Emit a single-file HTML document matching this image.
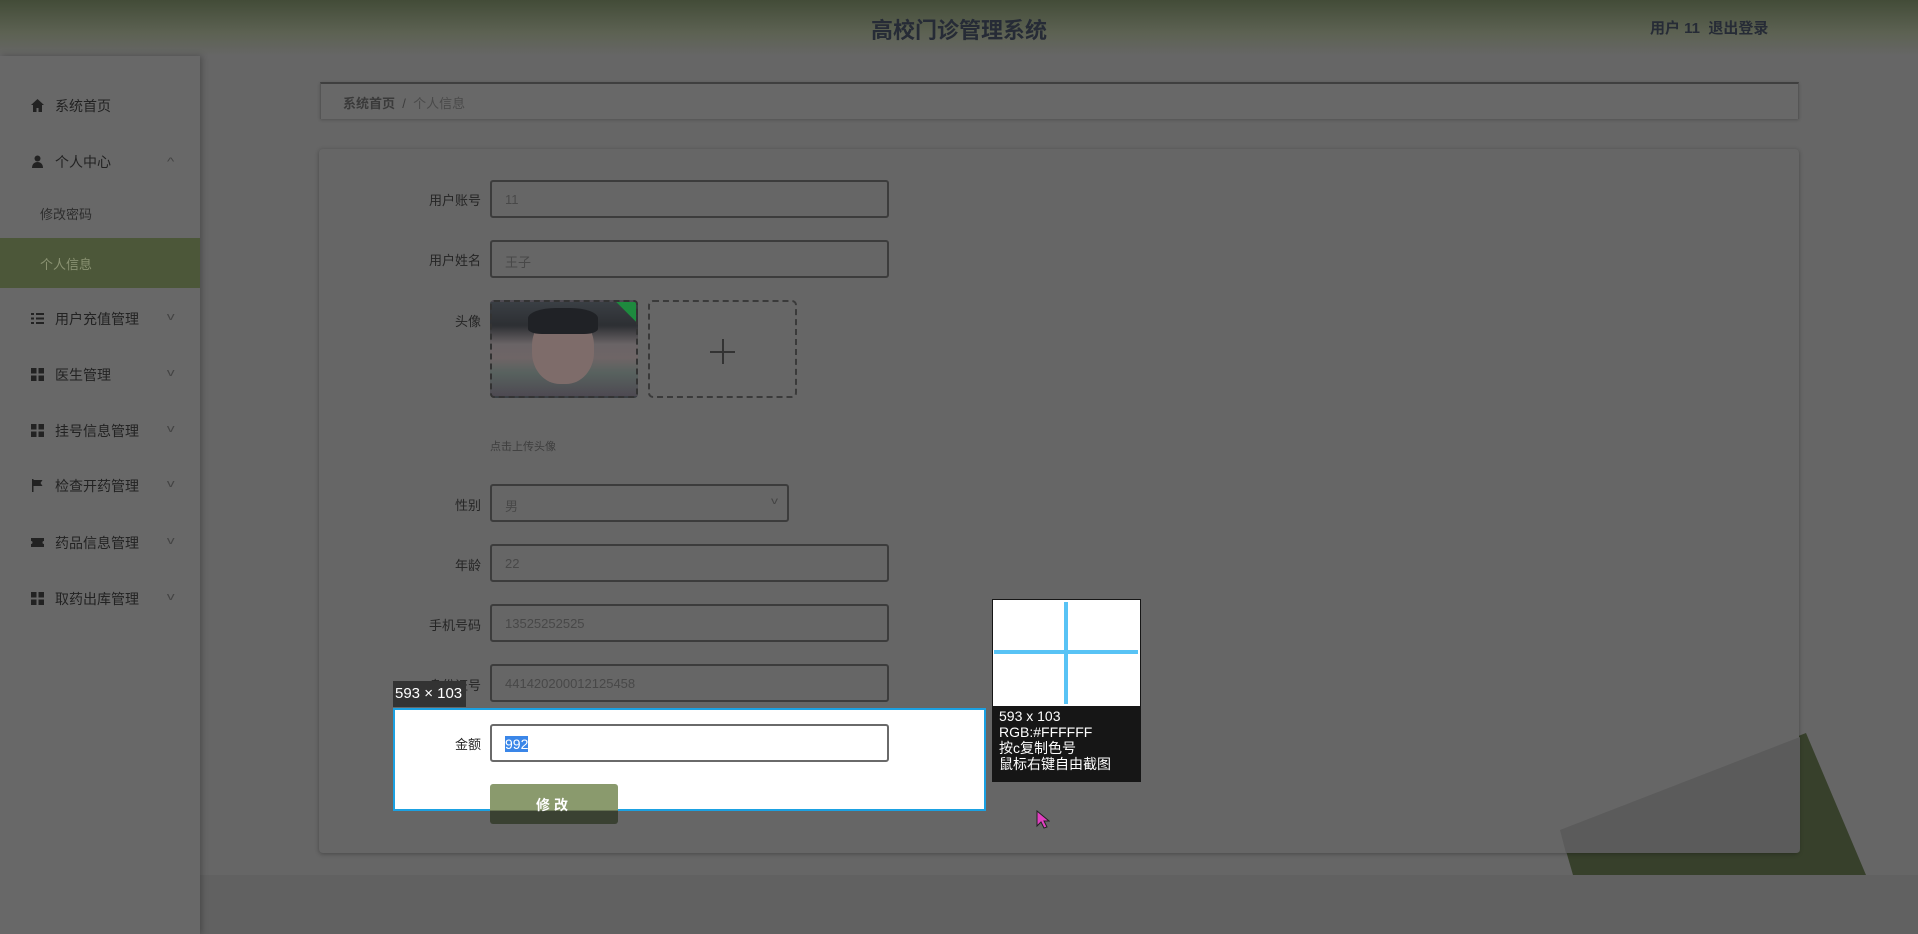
<!DOCTYPE html>
<html><head><meta charset="utf-8"><style>
*{margin:0;padding:0;box-sizing:border-box}
body{width:1918px;height:934px;overflow:hidden;background:#666;font-family:"Liberation Sans","Noto Sans CJK SC",sans-serif;position:relative;color:#2b2b2b}
.hdr{position:absolute;left:0;top:0;width:1918px;height:56px;background:linear-gradient(#434c38,#5d6253 60%,#666 100%)}
.title{position:absolute;left:0;width:1918px;top:13px;text-align:center;font-size:22px;font-weight:bold;color:#262b36}
.user{position:absolute;left:1650px;top:17px;font-size:15px;font-weight:bold;color:#262b36}
.side{position:absolute;left:0;top:56px;width:200px;height:878px;background:#686868;box-shadow:2px 0 6px rgba(0,0,0,.25)}
.mi{position:absolute;left:0;width:200px;font-size:14px;color:#222}
.mi .ic{position:absolute;left:31px;top:3px;width:13px;height:13px}
.mi .tx{position:absolute;left:55px}
.mi .ch{position:absolute;left:168px;top:2px;font-size:11px;color:#444;transform:scaleX(1.4)}
.act{position:absolute;left:0;top:238px;width:200px;height:50px;background:#4c5739}
.bc{position:absolute;left:320px;top:82px;width:1479px;height:37px;border-top:2px solid #3f3f3f;border-left:1px solid #555;border-right:1px solid #555;background:#686868;box-shadow:0 1px 3px rgba(0,0,0,.2);font-size:13px;color:#3d3d3d;padding:9px 0 0 22px}
.card{position:absolute;left:319px;top:149px;width:1480px;height:704px;background:#666;border-radius:4px;box-shadow:0 1px 5px rgba(0,0,0,.3)}
.lb{position:absolute;width:100px;left:381px;text-align:right;font-size:13px;color:#252525}
.in{position:absolute;left:490px;width:399px;height:38px;border:2px solid #3c3c3c;border-radius:3px;font-size:13px;color:#484848;padding:10px 0 0 13px}
</style></head><body>
<div class="hdr"></div>
<div class="title">高校门诊管理系统</div>
<div class="user">用户 11&nbsp;&nbsp;退出登录</div>
<div style="position:absolute;left:200px;top:875px;width:1718px;height:59px;background:#616161"></div>
<div class="side"></div>
<div class="act"></div>
<div class="mi" style="top:96px"><svg class="ic" viewBox="0 0 13 13"><path d="M6.5 0L0 6h2v7h3.5V9h2v4H11V6h2z" fill="#222"/></svg><span class="tx">系统首页</span></div>
<div class="mi" style="top:152px"><svg class="ic" viewBox="0 0 13 13"><circle cx="6.5" cy="3.5" r="3" fill="#222"/><path d="M1 13c0-4 2.5-6 5.5-6s5.5 2 5.5 6z" fill="#222"/></svg><span class="tx">个人中心</span><span class="ch" style="top:4px">^</span></div>
<div class="mi" style="top:204px;font-size:13px;color:#2d2d2d"><span class="tx" style="left:40px">修改密码</span></div>
<div class="mi" style="top:254px;font-size:13px;color:#8a9272"><span class="tx" style="left:40px">个人信息</span></div>
<div class="mi" style="top:309px"><svg class="ic" viewBox="0 0 13 13"><path d="M0 1h3v2H0zM5 1h8v2H5zM0 5.5h3v2H0zM5 5.5h8v2H5zM0 10h3v2H0zM5 10h8v2H5z" fill="#222"/></svg><span class="tx">用户充值管理</span><span class="ch">v</span></div>
<div class="mi" style="top:365px"><svg class="ic" viewBox="0 0 13 13"><path d="M0 0h5.5v5.5H0zM7.5 0H13v5.5H7.5zM0 7.5h5.5V13H0zM7.5 7.5H13V13H7.5z" fill="#222"/></svg><span class="tx">医生管理</span><span class="ch">v</span></div>
<div class="mi" style="top:421px"><svg class="ic" viewBox="0 0 13 13"><path d="M0 0h5.5v5.5H0zM7.5 0H13v5.5H7.5zM0 7.5h5.5V13H0zM7.5 7.5H13V13H7.5z" fill="#222"/></svg><span class="tx">挂号信息管理</span><span class="ch">v</span></div>
<div class="mi" style="top:476px"><svg class="ic" viewBox="0 0 13 13"><path d="M1 0h1.5v13H1zM2.5 1h9l-2 3 2 3h-9z" fill="#222"/></svg><span class="tx">检查开药管理</span><span class="ch">v</span></div>
<div class="mi" style="top:533px"><svg class="ic" viewBox="0 0 13 13"><path d="M0 2h13v3a1.5 1.5 0 000 3v3H0V8a1.5 1.5 0 000-3z" fill="#222"/></svg><span class="tx">药品信息管理</span><span class="ch">v</span></div>
<div class="mi" style="top:589px"><svg class="ic" viewBox="0 0 13 13"><path d="M0 0h5.5v5.5H0zM7.5 0H13v5.5H7.5zM0 7.5h5.5V13H0zM7.5 7.5H13V13H7.5z" fill="#222"/></svg><span class="tx">取药出库管理</span><span class="ch">v</span></div>

<div class="bc"><b style="font-weight:bold;color:#3a3a3a">系统首页</b>&nbsp;&nbsp;/&nbsp;&nbsp;<span style="color:#4a4a4a">个人信息</span></div>
<svg style="position:absolute;left:0;top:0" width="1918" height="934"><path d="M1806 733L1866 875H1573L1560 830z" fill="#37402b"/></svg>
<div class="card"></div>
<svg style="position:absolute;left:0;top:0" width="1918" height="934"><path d="M1560 830L1800 737V849Q1800 853 1796 853H1566z" fill="#5b5b5b"/></svg>

<div class="lb" style="top:190px">用户账号</div><div class="in" style="top:180px">11</div>
<div class="lb" style="top:250px">用户姓名</div><div class="in" style="top:240px">王子</div>
<div class="lb" style="top:311px">头像</div>
<div style="position:absolute;left:490px;top:300px;width:148px;height:98px;border:2px dashed #333;border-radius:4px;background:linear-gradient(#3a3f44 0%,#2d2f33 25%,#6a6466 45%,#6e6566 60%,#58625f 75%,#4e4a52 100%);overflow:hidden"><div style="position:absolute;right:-14px;top:-14px;width:28px;height:28px;background:#1e8a3e;transform:rotate(45deg)"></div><div style="position:absolute;left:40px;top:12px;width:62px;height:70px;border-radius:45%;background:#7e6c6a"></div><div style="position:absolute;left:36px;top:6px;width:70px;height:26px;border-radius:40% 40% 20% 20%;background:#202226"></div></div>
<div style="position:absolute;left:648px;top:300px;width:149px;height:98px;border:2px dashed #3a3a3a;border-radius:5px"></div>
<div style="position:absolute;left:710px;top:351px;width:25px;height:1.5px;background:#333"></div>
<div style="position:absolute;left:722px;top:339px;width:1.5px;height:25px;background:#333"></div>
<div style="position:absolute;left:490px;top:438px;font-size:11px;color:#3e3e3e">点击上传头像</div>
<div class="lb" style="top:495px">性别</div><div class="in" style="top:484px;width:299px">男<span style="position:absolute;right:10px;top:10px;color:#444;font-size:10px;transform:scaleX(1.4)">v</span></div>
<div class="lb" style="top:555px">年龄</div><div class="in" style="top:544px">22</div>
<div class="lb" style="top:615px">手机号码</div><div class="in" style="top:604px">13525252525</div>
<div class="lb" style="top:675px">身份证号</div><div class="in" style="top:664px">441420200012125458</div>

<div style="position:absolute;left:393px;top:708px;width:593px;height:103px;background:#fff;border:2px solid #1ba1e2"></div>
<div style="position:absolute;left:393px;top:681px;width:73px;height:26px;background:#333;color:#fff;font-size:15px;padding:4px 0 0 2px">593 × 103</div>
<div class="lb" style="top:734px">金额</div>
<div class="in" style="top:724px;background:#fff;border-color:#6a6a6a"><span style="background:#3a86e8;color:#fff;font-size:14px">992</span></div>
<div style="position:absolute;left:490px;top:784px;width:128px;height:40px;border-radius:3px;background:linear-gradient(#8a9a6d 0,#8a9a6d 66%,#3a4132 67%)"></div>
<div style="position:absolute;left:490px;top:795px;width:128px;text-align:center;color:#fff;font-size:14px;font-weight:bold;letter-spacing:4px">修改</div>

<div style="position:absolute;left:992px;top:599px;width:149px;height:183px;background:#161616"></div>
<div style="position:absolute;left:993px;top:600px;width:147px;height:106px;background:#fff"></div>
<div style="position:absolute;left:994px;top:650px;width:144px;height:4px;background:#58c3f5"></div>
<div style="position:absolute;left:1064px;top:602px;width:4px;height:102px;background:#58c3f5"></div>
<div style="position:absolute;left:999px;top:708px;color:#fff;font-size:14px;line-height:16px">593 x 103<br>RGB:#FFFFFF<br>按c复制色号<br>鼠标右键自由截图</div>
<svg style="position:absolute;left:1036px;top:810px" width="14" height="20"><path d="M1 1v15l4-4 3 6 3-1-3-6h5z" fill="#e040c0" stroke="#222" stroke-width="1"/></svg>
</body></html>
